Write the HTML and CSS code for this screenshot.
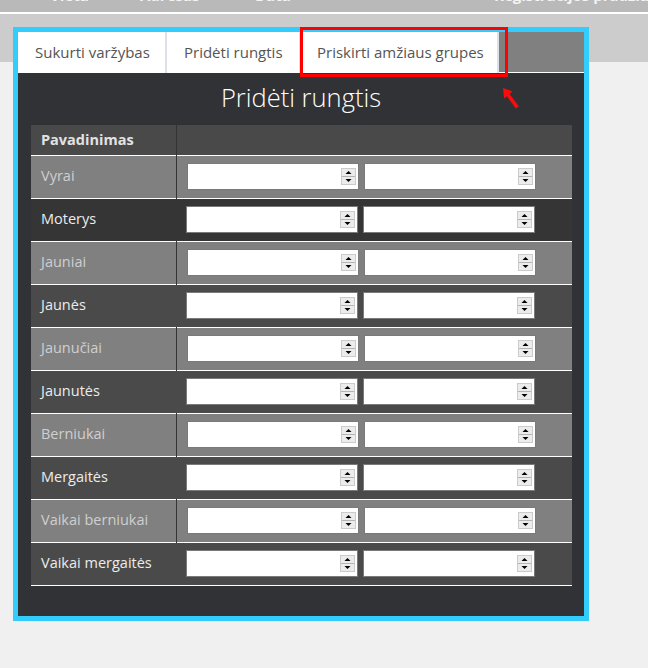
FILE: index.html
```html
<!DOCTYPE html>
<html lang="lt">
<head>
<meta charset="utf-8">
<title>Pridėti rungtis</title>
<link rel="stylesheet" href="styles.css">
</head>
<body>
<svg class="defs" width="0" height="0" aria-hidden="true">
  <symbol id="spin" viewBox="0 0 15 17">
    <rect width="15" height="17" fill="#cbcbcb"/>
    <rect x="1" y="1" width="13" height="7" fill="#ececec"/>
    <rect x="1" y="9" width="13" height="7" fill="#ececec"/>
    <rect x="1" y="8" width="13" height="1" fill="#b4b4b4"/>
    <path d="M7.5 3 L10.5 6 L4.5 6 Z" fill="#000"/>
    <path d="M4.5 11 L10.5 11 L7.5 14 Z" fill="#000"/>
  </symbol>
</svg>

<div class="topbar">
  <div class="topbar-cells">
    <span class="th-vieta">Vieta</span>
    <span class="th-adresas">Adresas</span>
    <span class="th-data">Data</span>
    <span class="th-reg">Registracijos pradžia</span>
  </div>
</div>
<div class="topline"></div>

<main class="page">
  <section class="panel">
    <nav class="tabs">
      <a class="tab tab-1">Sukurti varžybas</a>
      <a class="tab tab-2">Pridėti rungtis</a>
      <a class="tab tab-3">Priskirti amžiaus grupes</a>
    </nav>
    <h1 class="title">Pridėti rungtis</h1>
    <table class="grid">
      <thead>
        <tr><th class="name">Pavadinimas</th><th></th></tr>
      </thead>
      <tbody>
        <tr class="odd"><td class="name">Vyrai</td><td class="inputs"><div class="pair"><label class="num"><input type="text"><svg class="spin"><use href="#spin"/></svg></label><label class="num"><input type="text"><svg class="spin"><use href="#spin"/></svg></label></div></td></tr>
        <tr class="even dark"><td class="name">Moterys</td><td class="inputs"><div class="pair"><label class="num"><input type="text"><svg class="spin"><use href="#spin"/></svg></label><label class="num"><input type="text"><svg class="spin"><use href="#spin"/></svg></label></div></td></tr>
        <tr class="odd"><td class="name">Jauniai</td><td class="inputs"><div class="pair"><label class="num"><input type="text"><svg class="spin"><use href="#spin"/></svg></label><label class="num"><input type="text"><svg class="spin"><use href="#spin"/></svg></label></div></td></tr>
        <tr class="even"><td class="name">Jaunės</td><td class="inputs"><div class="pair"><label class="num"><input type="text"><svg class="spin"><use href="#spin"/></svg></label><label class="num"><input type="text"><svg class="spin"><use href="#spin"/></svg></label></div></td></tr>
        <tr class="odd"><td class="name">Jaunučiai</td><td class="inputs"><div class="pair"><label class="num"><input type="text"><svg class="spin"><use href="#spin"/></svg></label><label class="num"><input type="text"><svg class="spin"><use href="#spin"/></svg></label></div></td></tr>
        <tr class="even"><td class="name">Jaunutės</td><td class="inputs"><div class="pair"><label class="num"><input type="text"><svg class="spin"><use href="#spin"/></svg></label><label class="num"><input type="text"><svg class="spin"><use href="#spin"/></svg></label></div></td></tr>
        <tr class="odd"><td class="name">Berniukai</td><td class="inputs"><div class="pair"><label class="num"><input type="text"><svg class="spin"><use href="#spin"/></svg></label><label class="num"><input type="text"><svg class="spin"><use href="#spin"/></svg></label></div></td></tr>
        <tr class="even"><td class="name">Mergaitės</td><td class="inputs"><div class="pair"><label class="num"><input type="text"><svg class="spin"><use href="#spin"/></svg></label><label class="num"><input type="text"><svg class="spin"><use href="#spin"/></svg></label></div></td></tr>
        <tr class="odd"><td class="name">Vaikai berniukai</td><td class="inputs"><div class="pair"><label class="num"><input type="text"><svg class="spin"><use href="#spin"/></svg></label><label class="num"><input type="text"><svg class="spin"><use href="#spin"/></svg></label></div></td></tr>
        <tr class="even"><td class="name">Vaikai mergaitės</td><td class="inputs"><div class="pair"><label class="num"><input type="text"><svg class="spin"><use href="#spin"/></svg></label><label class="num"><input type="text"><svg class="spin"><use href="#spin"/></svg></label></div></td></tr>
      </tbody>
    </table>
  </section>
</main>

<div class="highlight"></div>
<svg class="pointer" width="20" height="24" viewBox="0 0 20 24" aria-hidden="true">
  <path d="M1 1 L10.5 4.5 L7.6 6.9 L16.8 19.2 L13.8 21.6 L4.9 9.2 L2.1 11.5 Z" fill="#ff0a0a"/>
</svg>
</body>
</html>
```

FILE: styles.css
```css
* { box-sizing: border-box; }

html, body {
  margin: 0;
  padding: 0;
}

body {
  background: #f0f0f0;
  font-family: "Open Sans", "Noto Sans", sans-serif;
  position: relative;
  min-height: 668px;
}

.defs { position: absolute; width: 0; height: 0; overflow: hidden; }

.topbar {
  height: 12px;
  background: #b9b9b9;
  overflow: hidden;
}

.topbar-cells {
  display: grid;
  grid-template-columns: 90px 115px 239px auto;
  padding-left: 50px;
  margin-top: -15px;
  font-size: 15px;
  line-height: 20px;
  font-weight: 700;
  color: #f4f4f4;
  white-space: nowrap;
}

.topline {
  height: 2px;
  background: #ffffff;
}

.page {
  background: linear-gradient(#cccccc 0, #cccccc 48px, #f0f0f0 48px);
  padding: 13px 0 0 13px;
  height: 654px;
}

.panel {
  width: 576px;
  height: 594px;
  border: 5px solid #33cdfd;
  background: #313236;
}

.tabs {
  display: flex;
  height: 41px;
  background: linear-gradient(#808080 0, #808080 40px, #ffffff 40px);
}

.tab {
  display: block;
  height: 41px;
  background: #ffffff;
  border-right: 2px solid #dde0e4;
  padding-left: 17px;
  font-size: 15px;
  line-height: 41px;
  color: #555555;
  white-space: nowrap;
}

.tab-1 { width: 149px; }
.tab-2 { width: 134px; }
.tab-3 { width: 198px; padding-left: 16px; }

.title {
  margin: 0;
  height: 52px;
  line-height: 48px;
  text-align: center;
  font-size: 25.5px;
  font-weight: 300;
  color: #ffffff;
}

.grid {
  margin: 0 0 0 13px;
  width: 541px;
  border-collapse: collapse;
  font-size: 14.5px;
}

.grid th,
.grid td {
  padding: 0;
  text-align: left;
}

.grid thead tr {
  height: 30px;
  background: #494949;
  border-bottom: 1px solid #ffffff;
}

.grid th {
  font-weight: 700;
  color: #e2e2e2;
}

.grid th.name {
  border-right: 1px solid #333333;
}

.grid .name {
  width: 145px;
  padding-left: 10px;
}

.grid tbody tr {
  height: 43px;
  border-bottom: 1px solid #ffffff;
}

.grid tr.odd {
  background: #808080;
  color: #cfcfcf;
}

.grid tr.odd td.name {
  border-right: 1px solid #353535;
}

.grid tr.even {
  background: #4a4a4a;
  color: #ececec;
}

.grid tr.even.dark {
  background: #353535;
}

.grid td.name {
  padding-bottom: 3px;
}

.grid td.inputs {
  padding-left: 10px;
}

.pair {
  display: flex;
  gap: 5px;
}

.num {
  display: flex;
  align-items: center;
  width: 172px;
  height: 27px;
  background: #ffffff;
  border: 1px solid #7a7a7a;
  padding-right: 2px;
}

.num input {
  flex: 1;
  min-width: 0;
  height: 100%;
  border: 0;
  outline: none;
  background: transparent;
  padding: 0 4px;
  font: inherit;
}

.spin {
  width: 15px;
  height: 17px;
  flex: none;
}

.highlight {
  position: absolute;
  left: 300px;
  top: 27px;
  width: 208px;
  height: 50px;
  border: 3.5px solid #ff0000;
}

.pointer {
  position: absolute;
  left: 502px;
  top: 87px;
}
```
